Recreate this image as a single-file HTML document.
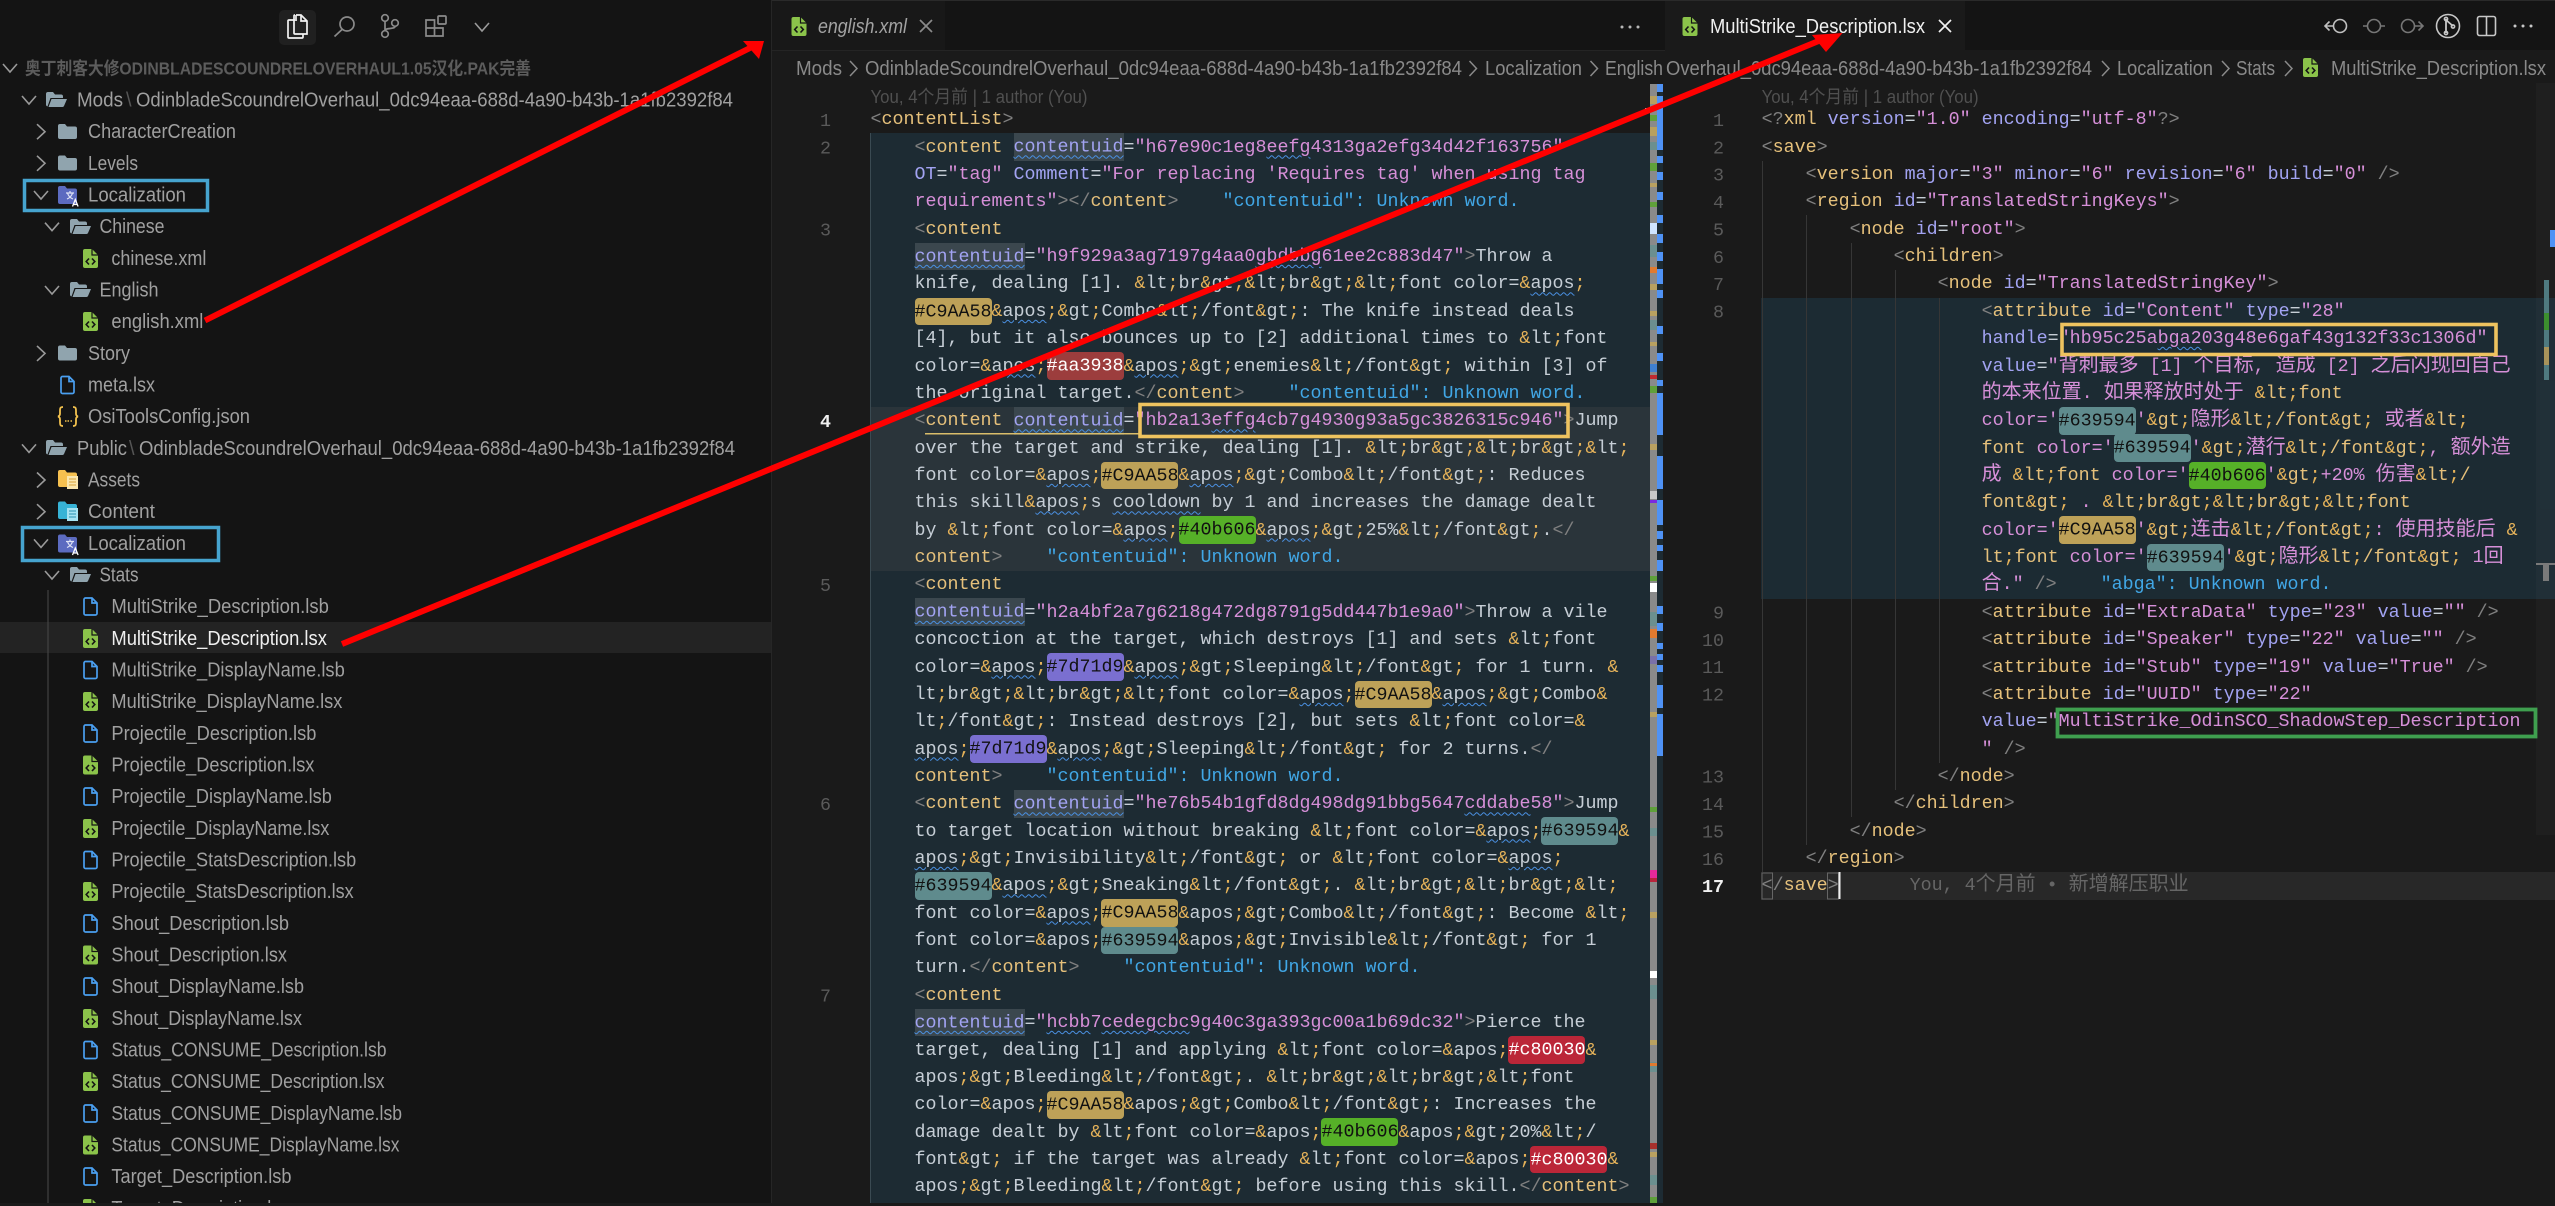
<!DOCTYPE html>
<html lang="en"><head><meta charset="utf-8"><title>VS Code</title>
<style>
html,body{margin:0;padding:0;width:2555px;height:1203px;overflow:hidden;background:#1a1a1a}
.r{position:absolute}
pre{position:absolute;margin:0;top:106.32px;font:18.33px/27.36px "Liberation Mono","Noto Sans CJK SC",monospace;color:#c6ced6;white-space:pre;overflow:hidden;height:1100px}
b{font-weight:normal;color:#808080}
i{font-style:normal;color:#e5c07b}
u{text-decoration:none;color:#a2a3f2}
s{text-decoration:none;color:#d68fd8}
em{font-style:normal;color:#e6b35a}
cite{font-style:normal;color:#41a7e6}
mark{background:#3b474e;color:#a2a3f2;padding:3.3px 0}
var{font-style:normal;text-decoration:underline wavy #4a90e2 1px;text-underline-offset:3px}
kbd{font:inherit;padding:3.3px 0;border-radius:4px;color:#111}
.cy{background:#bda158}.cr{background:#9c3d3d;color:#fff}.cg{background:#56b028}.cp{background:#7a6fd0}.ct{background:#5f8b8d}.cc{background:#bb2638;color:#fff}
small{font:20px/0 "Noto Sans CJK SC",sans-serif}
svg{position:absolute;left:0;top:0}
</style></head><body>
<div class="r" style="left:0;top:0;width:771px;height:1203px;background:#141414"></div>
<div class="r" style="left:0;top:622px;width:771px;height:31px;background:#232323"></div>
<div class="r" style="left:771px;top:0;width:1784px;height:50px;background:#141414"></div>
<div class="r" style="left:772px;top:0;width:173px;height:50px;background:#181818"></div>
<div class="r" style="left:1665px;top:0;width:300px;height:51px;background:#1a1a1a"></div>
<div class="r" style="left:771px;top:0;width:1784px;height:1px;background:#2a2a2a"></div>
<div class="r" style="left:771px;top:50px;width:894px;height:1px;background:#242424"></div>
<div class="r" style="left:771px;top:0;width:1px;height:1203px;background:#262626"></div>
<div class="r" style="left:870px;top:133px;width:780px;height:1070px;background:#1d2b33"></div>
<div class="r" style="left:870px;top:407px;width:780px;height:164px;background:#2a343a"></div>
<div class="r" style="left:870px;top:133px;width:1px;height:1070px;background:#3a4a52"></div>
<div class="r" style="left:1657px;top:84px;width:6px;height:1119px;background:#1d2b33"></div>
<div class="r" style="left:1761px;top:298px;width:794px;height:301px;background:#1c2b33"></div>
<div class="r" style="left:1761px;top:872px;width:794px;height:28px;background:#282828"></div>
<div class="r" style="left:1761.5px;top:161px;width:1px;height:711px;background:#363636"></div>
<div class="r" style="left:1806px;top:215px;width:1px;height:630px;background:#363636"></div>
<div class="r" style="left:1851px;top:243px;width:1px;height:574px;background:#363636"></div>
<div class="r" style="left:1895px;top:270px;width:1px;height:520px;background:#363636"></div>
<div class="r" style="left:1939px;top:298px;width:1px;height:465px;background:#363636"></div>
<div class="r" style="left:2536px;top:83px;width:19px;height:752px;background:rgba(255,255,255,.025)"></div>

<pre style="left:870.5px;width:782px"><b>&lt;</b><i>contentList</i><b>&gt;</b>
    <b>&lt;</b><i>content</i> <mark><var>contentuid</var></mark>=<s>"h67e90c1eg8<var>eefg</var>4313ga2efg34d42f163756"</s>
    <u>OT</u>=<s>"tag"</s> <u>Comment</u>=<s>"For replacing 'Requires tag' when using tag</s>
    <s>requirements"</s><b>&gt;&lt;/</b><i>content</i><b>&gt;</b>    <cite>"contentuid": Unknown word.</cite>
    <b>&lt;</b><i>content</i>
    <mark><var>contentuid</var></mark>=<s>"h9f929a3ag7197g4aa0<var>gbdbbg</var>61ee2c883d47"</s><b>&gt;</b>Throw a
    knife, dealing [1]. <em>&amp;</em>lt<em>;</em>br<em>&amp;</em>gt<em>;</em><em>&amp;</em>lt<em>;</em>br<em>&amp;</em>gt<em>;</em><em>&amp;</em>lt<em>;</em>font color=<em>&amp;</em><var>apos</var><em>;</em>
    <kbd class="cy">#C9AA58</kbd><em>&amp;</em><var>apos</var><em>;</em><em>&amp;</em>gt<em>;</em>Combo<em>&amp;</em>lt<em>;</em>/font<em>&amp;</em>gt<em>;</em>: The knife instead deals
    [4], but it also bounces up to [2] additional times to <em>&amp;</em>lt<em>;</em>font
    color=<em>&amp;</em><var>apos</var><em>;</em><kbd class="cr">#aa3938</kbd><em>&amp;</em><var>apos</var><em>;</em><em>&amp;</em>gt<em>;</em>enemies<em>&amp;</em>lt<em>;</em>/font<em>&amp;</em>gt<em>;</em> within [3] of
    the original target.<b>&lt;/</b><i>content</i><b>&gt;</b>    <cite>"contentuid": Unknown word.</cite>
    <b>&lt;</b><i>content</i> <mark><var>contentuid</var></mark>=<s>"hb2a13<var>effg</var>4cb7g4930g93a5gc3826315c946"</s><b>&gt;</b>Jump
    over the target and strike, dealing [1]. <em>&amp;</em>lt<em>;</em>br<em>&amp;</em>gt<em>;</em><em>&amp;</em>lt<em>;</em>br<em>&amp;</em>gt<em>;</em><em>&amp;</em>lt<em>;</em>
    font color=<em>&amp;</em><var>apos</var><em>;</em><kbd class="cy">#C9AA58</kbd><em>&amp;</em><var>apos</var><em>;</em><em>&amp;</em>gt<em>;</em>Combo<em>&amp;</em>lt<em>;</em>/font<em>&amp;</em>gt<em>;</em>: Reduces
    this skill<em>&amp;</em><var>apos</var><em>;</em>s <var>cooldown</var> by 1 and increases the damage dealt
    by <em>&amp;</em>lt<em>;</em>font color=<em>&amp;</em><var>apos</var><em>;</em><kbd class="cg">#40b606</kbd><em>&amp;</em><var>apos</var><em>;</em><em>&amp;</em>gt<em>;</em>25%<em>&amp;</em>lt<em>;</em>/font<em>&amp;</em>gt<em>;</em>.<b>&lt;/</b>
    <i>content</i><b>&gt;</b>    <cite>"contentuid": Unknown word.</cite>
    <b>&lt;</b><i>content</i>
    <mark><var>contentuid</var></mark>=<s>"h2a4bf2a7g6218g472dg8791g5dd447b1e9a0"</s><b>&gt;</b>Throw a vile
    concoction at the target, which destroys [1] and sets <em>&amp;</em>lt<em>;</em>font
    color=<em>&amp;</em><var>apos</var><em>;</em><kbd class="cp">#7d71d9</kbd><em>&amp;</em><var>apos</var><em>;</em><em>&amp;</em>gt<em>;</em>Sleeping<em>&amp;</em>lt<em>;</em>/font<em>&amp;</em>gt<em>;</em> for 1 turn. <em>&amp;</em>
    lt<em>;</em>br<em>&amp;</em>gt<em>;</em><em>&amp;</em>lt<em>;</em>br<em>&amp;</em>gt<em>;</em><em>&amp;</em>lt<em>;</em>font color=<em>&amp;</em><var>apos</var><em>;</em><kbd class="cy">#C9AA58</kbd><em>&amp;</em><var>apos</var><em>;</em><em>&amp;</em>gt<em>;</em>Combo<em>&amp;</em>
    lt<em>;</em>/font<em>&amp;</em>gt<em>;</em>: Instead destroys [2], but sets <em>&amp;</em>lt<em>;</em>font color=<em>&amp;</em>
    <var>apos</var><em>;</em><kbd class="cp">#7d71d9</kbd><em>&amp;</em><var>apos</var><em>;</em><em>&amp;</em>gt<em>;</em>Sleeping<em>&amp;</em>lt<em>;</em>/font<em>&amp;</em>gt<em>;</em> for 2 turns.<b>&lt;/</b>
    <i>content</i><b>&gt;</b>    <cite>"contentuid": Unknown word.</cite>
    <b>&lt;</b><i>content</i> <mark><var>contentuid</var></mark>=<s>"he76b54b1gfd8dg498dg91bbg5647<var>cddabe</var>58"</s><b>&gt;</b>Jump
    to target location without breaking <em>&amp;</em>lt<em>;</em>font color=<em>&amp;</em><var>apos</var><em>;</em><kbd class="ct">#639594</kbd><em>&amp;</em>
    <var>apos</var><em>;</em><em>&amp;</em>gt<em>;</em>Invisibility<em>&amp;</em>lt<em>;</em>/font<em>&amp;</em>gt<em>;</em> or <em>&amp;</em>lt<em>;</em>font color=<em>&amp;</em><var>apos</var><em>;</em>
    <kbd class="ct">#639594</kbd><em>&amp;</em><var>apos</var><em>;</em><em>&amp;</em>gt<em>;</em>Sneaking<em>&amp;</em>lt<em>;</em>/font<em>&amp;</em>gt<em>;</em>. <em>&amp;</em>lt<em>;</em>br<em>&amp;</em>gt<em>;</em><em>&amp;</em>lt<em>;</em>br<em>&amp;</em>gt<em>;</em><em>&amp;</em>lt<em>;</em>
    font color=<em>&amp;</em><var>apos</var><em>;</em><kbd class="cy">#C9AA58</kbd><em>&amp;</em>apos<em>;</em><em>&amp;</em>gt<em>;</em>Combo<em>&amp;</em>lt<em>;</em>/font<em>&amp;</em>gt<em>;</em>: Become <em>&amp;</em>lt<em>;</em>
    font color=<em>&amp;</em>apos<em>;</em><kbd class="ct">#639594</kbd><em>&amp;</em>apos<em>;</em><em>&amp;</em>gt<em>;</em>Invisible<em>&amp;</em>lt<em>;</em>/font<em>&amp;</em>gt<em>;</em> for 1
    turn.<b>&lt;/</b><i>content</i><b>&gt;</b>    <cite>"contentuid": Unknown word.</cite>
    <b>&lt;</b><i>content</i>
    <mark><var>contentuid</var></mark>=<s>"<var>hcbb</var>7<var>cedegcbc</var>9g40c3ga393gc00a1b69dc32"</s><b>&gt;</b>Pierce the
    target, dealing [1] and applying <em>&amp;</em>lt<em>;</em>font color=<em>&amp;</em>apos<em>;</em><kbd class="cc">#c80030</kbd><em>&amp;</em>
    apos<em>;</em><em>&amp;</em>gt<em>;</em>Bleeding<em>&amp;</em>lt<em>;</em>/font<em>&amp;</em>gt<em>;</em>. <em>&amp;</em>lt<em>;</em>br<em>&amp;</em>gt<em>;</em><em>&amp;</em>lt<em>;</em>br<em>&amp;</em>gt<em>;</em><em>&amp;</em>lt<em>;</em>font
    color=<em>&amp;</em>apos<em>;</em><kbd class="cy">#C9AA58</kbd><em>&amp;</em>apos<em>;</em><em>&amp;</em>gt<em>;</em>Combo<em>&amp;</em>lt<em>;</em>/font<em>&amp;</em>gt<em>;</em>: Increases the
    damage dealt by <em>&amp;</em>lt<em>;</em>font color=<em>&amp;</em>apos<em>;</em><kbd class="cg">#40b606</kbd><em>&amp;</em>apos<em>;</em><em>&amp;</em>gt<em>;</em>20%<em>&amp;</em>lt<em>;</em>/
    font<em>&amp;</em>gt<em>;</em> if the target was already <em>&amp;</em>lt<em>;</em>font color=<em>&amp;</em>apos<em>;</em><kbd class="cc">#c80030</kbd><em>&amp;</em>
    apos<em>;</em><em>&amp;</em>gt<em>;</em>Bleeding<em>&amp;</em>lt<em>;</em>/font<em>&amp;</em>gt<em>;</em> before using this skill.<b>&lt;/</b><i>content</i><b>&gt;</b></pre>

<pre style="left:1761.6px;width:775px"><b>&lt;?</b><i>xml</i> <u>version</u>=<s>"1.0"</s> <u>encoding</u>=<s>"utf-8"</s><b>?&gt;</b>
<b>&lt;</b><i>save</i><b>&gt;</b>
    <b>&lt;</b><i>version</i> <u>major</u>=<s>"3"</s> <u>minor</u>=<s>"6"</s> <u>revision</u>=<s>"6"</s> <u>build</u>=<s>"0"</s> <b>/&gt;</b>
    <b>&lt;</b><i>region</i> <u>id</u>=<s>"TranslatedStringKeys"</s><b>&gt;</b>
        <b>&lt;</b><i>node</i> <u>id</u>=<s>"root"</s><b>&gt;</b>
            <b>&lt;</b><i>children</i><b>&gt;</b>
                <b>&lt;</b><i>node</i> <u>id</u>=<s>"TranslatedStringKey"</s><b>&gt;</b>
                    <b>&lt;</b><i>attribute</i> <u>id</u>=<s>"Content"</s> <u>type</u>=<s>"28"</s>
                    <u>handle</u>=<s>"hb95c25a<var>bga2</var>03g48e6gaf43g132f33c1306d"</s>
                    <u>value</u>=<s>"<small>背刺最多</small> [1] <small>个目标</small>, <small>造成</small> [2] <small>之后闪现回自己</small></s>
                    <s><small>的本来位置</small>. <small>如果释放时处于</small> </s><em>&amp;</em><i>lt</i><em>;</em><i>font</i>
                    <s>color='</s><kbd class="ct">#639594</kbd><s>'</s><em>&amp;</em><i>gt</i><em>;</em><s><small>隐形</small></s><em>&amp;</em><i>lt</i><em>;</em><i>/font</i><em>&amp;</em><i>gt</i><em>;</em> <s><small>或者</small></s><em>&amp;</em><i>lt</i><em>;</em>
                    <i>font</i> <s>color='</s><kbd class="ct">#639594</kbd><s>'</s><em>&amp;</em><i>gt</i><em>;</em><s><small>潜行</small></s><em>&amp;</em><i>lt</i><em>;</em><i>/font</i><em>&amp;</em><i>gt</i><em>;</em><s>, <small>额外造</small></s>
                    <s><small>成</small> </s><em>&amp;</em><i>lt</i><em>;</em><i>font</i> <s>color='</s><kbd class="cg">#40b606</kbd><s>'</s><em>&amp;</em><i>gt</i><em>;</em><s>+20% <small>伤害</small></s><em>&amp;</em><i>lt</i><em>;</em><i>/</i>
                    <i>font</i><em>&amp;</em><i>gt</i><em>;</em> <s>.</s> <em>&amp;</em><i>lt</i><em>;</em><i>br</i><em>&amp;</em><i>gt</i><em>;</em><em>&amp;</em><i>lt</i><em>;</em><i>br</i><em>&amp;</em><i>gt</i><em>;</em><em>&amp;</em><i>lt</i><em>;</em><i>font</i>
                    <s>color='</s><kbd class="cy">#C9AA58</kbd><s>'</s><em>&amp;</em><i>gt</i><em>;</em><s><small>连击</small></s><em>&amp;</em><i>lt</i><em>;</em><i>/font</i><em>&amp;</em><i>gt</i><em>;</em><s>: <small>使用技能后</small> </s><em>&amp;</em>
                    <i>lt</i><em>;</em><i>font</i> <s>color='</s><kbd class="ct">#639594</kbd><s>'</s><em>&amp;</em><i>gt</i><em>;</em><s><small>隐形</small></s><em>&amp;</em><i>lt</i><em>;</em><i>/font</i><em>&amp;</em><i>gt</i><em>;</em> <s>1<small>回</small></s>
                    <s><small>合</small>."</s> <b>/&gt;</b>    <cite>"abga": Unknown word.</cite>
                    <b>&lt;</b><i>attribute</i> <u>id</u>=<s>"ExtraData"</s> <u>type</u>=<s>"23"</s> <u>value</u>=<s>""</s> <b>/&gt;</b>
                    <b>&lt;</b><i>attribute</i> <u>id</u>=<s>"Speaker"</s> <u>type</u>=<s>"22"</s> <u>value</u>=<s>""</s> <b>/&gt;</b>
                    <b>&lt;</b><i>attribute</i> <u>id</u>=<s>"Stub"</s> <u>type</u>=<s>"19"</s> <u>value</u>=<s>"True"</s> <b>/&gt;</b>
                    <b>&lt;</b><i>attribute</i> <u>id</u>=<s>"UUID"</s> <u>type</u>=<s>"22"</s>
                    <u>value</u>=<s>"MultiStrike_OdinSCO_ShadowStep_Description</s>
                    <s>"</s> <b>/&gt;</b>
                <b>&lt;/</b><i>node</i><b>&gt;</b>
            <b>&lt;/</b><i>children</i><b>&gt;</b>
        <b>&lt;/</b><i>node</i><b>&gt;</b>
    <b>&lt;/</b><i>region</i><b>&gt;</b>
<b>&lt;/</b><i>save</i><b>&gt;</b><span style="margin-left:71px;color:#666">You, 4<small>个月前</small> • <small>新增解压职业</small></span></pre>

<svg width="2555" height="1203" viewBox="0 0 2555 1203" xmlns="http://www.w3.org/2000/svg">
<defs>
<symbol id="xm" viewBox="0 0 15 19" width="15" height="19" overflow="visible"><path d="M0 2a2 2 0 0 1 2-2h7l6 6v11a2 2 0 0 1-2 2H2a2 2 0 0 1-2-2z" fill="#8bc34a"/><path d="M9 0v6h6" fill="none" stroke="#141414" stroke-width="1.2"/><path d="M6 9.5L3.2 12.5L6 15.5M9 9.5L11.8 12.5L9 15.5" fill="none" stroke="#141414" stroke-width="1.6"/></symbol>
<symbol id="bl" viewBox="0 0 15 19" width="15" height="19" overflow="visible"><path d="M1 2.5a1.5 1.5 0 0 1 1.5-1.5H9l5 5v10.5a1.5 1.5 0 0 1-1.5 1.5h-10A1.5 1.5 0 0 1 1 16.5zM9 1v5h5" fill="none" stroke="#4a9ff0" stroke-width="1.7"/></symbol>
<symbol id="fc" viewBox="0 0 19 15" width="19" height="15" overflow="visible"><path d="M0 2a2 2 0 0 1 2-2h5l2 2.5h8a2 2 0 0 1 2 2V13a2 2 0 0 1-2 2H2a2 2 0 0 1-2-2z" fill="#90a4ae"/></symbol>
<symbol id="fo" viewBox="0 0 21 15" width="21" height="15" overflow="visible"><path d="M0 2a2 2 0 0 1 2-2h5l2 2.5h6a2 2 0 0 1 2 2V6H4.5L1.5 14.5A2 2 0 0 1 0 13z" fill="#90a4ae"/><path d="M5.5 7H21l-3 7a1.6 1.6 0 0 1-1.5 1H2.5z" fill="#90a4ae"/></symbol>
<symbol id="fl" viewBox="0 0 21 22" width="21" height="22" overflow="visible"><path d="M0 2a2 2 0 0 1 2-2h5l2 2.5h8a2 2 0 0 1 2 2V16a2 2 0 0 1-2 2H2a2 2 0 0 1-2-2z" fill="#5c6bc0"/><path d="M8 7h8M12 5v2M9.5 7c.8 3 3 5 5.5 6M14.5 7c-.8 3-3 5-5.5 6" fill="none" stroke="#dfe3f5" stroke-width="1.2"/><path d="M14.5 20.5l2.8-7 2.8 7M15.5 18.5h3.6" fill="none" stroke="#fff" stroke-width="1.3"/></symbol>
<path id="cd" d="M-7-4L0 4L7-4" fill="none" stroke="#9a9a9a" stroke-width="1.6"/>
<path id="cr" d="M-4-7.5L4 0L-4 7.5" fill="none" stroke="#9a9a9a" stroke-width="1.6"/>
</defs>

<!-- activity icons -->
<rect x="279" y="10" width="37" height="35" rx="5" fill="#202020"/>
<path d="M296 15h5l6 6v13h-4M296 15v6M301 15v6h6M295 20h-6a1 1 0 0 0-1 1v16a1 1 0 0 0 1 1h13a1 1 0 0 0 1-1v-3h-8a1 1 0 0 1-1-1V16a1 1 0 0 1 1-1" fill="none" stroke="#f2f2f2" stroke-width="1.7"/>
<circle cx="347" cy="24" r="7" fill="none" stroke="#8a8a8a" stroke-width="1.7"/><path d="M342 29.5L334.5 36.5" stroke="#8a8a8a" stroke-width="1.7"/>
<circle cx="385" cy="18" r="3.3" fill="none" stroke="#8a8a8a" stroke-width="1.7"/><circle cx="385" cy="34" r="3.3" fill="none" stroke="#8a8a8a" stroke-width="1.7"/><circle cx="395" cy="23" r="3.3" fill="none" stroke="#8a8a8a" stroke-width="1.7"/><path d="M385 21.5v9M395 26.5c0 3-10 1-10 4" fill="none" stroke="#8a8a8a" stroke-width="1.7"/>
<path d="M426 20h8.5v16H426zM426 28h17v8h-8.5M434.5 28v-8" fill="none" stroke="#8a8a8a" stroke-width="1.7"/><rect x="438" y="16" width="8" height="8" rx="1" fill="none" stroke="#8a8a8a" stroke-width="1.7"/>
<use href="#cd" x="482" y="27"/>

<!-- sidebar -->
<line x1="48" y1="590" x2="48" y2="1203" stroke="#4a4a4a" stroke-width="1"/>
<g font-family="'Liberation Sans','Noto Sans CJK SC',sans-serif" font-size="20" fill="#a0a0a0">
<text x="25" y="74.5" font-size="17.5" font-weight="bold" fill="#5c5c5c" textLength="506" lengthAdjust="spacingAndGlyphs">奥丁刺客大修ODINBLADESCOUNDRELOVERHAUL1.05汉化.PAK完善</text>
<text x="77" y="106.5" textLength="46" lengthAdjust="spacingAndGlyphs">Mods</text><text x="126" y="106.5" fill="#555">\</text><text x="136" y="106.5" textLength="597" lengthAdjust="spacingAndGlyphs">OdinbladeScoundrelOverhaul_0dc94eaa-688d-4a90-b43b-1a1fb2392f84</text>
<text x="88" y="138.2" textLength="148" lengthAdjust="spacingAndGlyphs">CharacterCreation</text>
<text x="88" y="169.8" textLength="50" lengthAdjust="spacingAndGlyphs">Levels</text>
<text x="88" y="201.5" textLength="98" lengthAdjust="spacingAndGlyphs">Localization</text>
<text x="99.5" y="233.2" textLength="65" lengthAdjust="spacingAndGlyphs">Chinese</text>
<text x="111.4" y="264.9" textLength="95" lengthAdjust="spacingAndGlyphs">chinese.xml</text>
<text x="99.5" y="296.5" textLength="59" lengthAdjust="spacingAndGlyphs">English</text>
<text x="111.4" y="328.2" textLength="92" lengthAdjust="spacingAndGlyphs">english.xml</text>
<text x="88" y="359.9" textLength="42" lengthAdjust="spacingAndGlyphs">Story</text>
<text x="88" y="391.5" textLength="67" lengthAdjust="spacingAndGlyphs">meta.lsx</text>
<text x="88" y="423.2" textLength="162" lengthAdjust="spacingAndGlyphs">OsiToolsConfig.json</text>
<text x="77" y="454.9" textLength="50" lengthAdjust="spacingAndGlyphs">Public</text><text x="129" y="454.9" fill="#555">\</text><text x="139" y="454.9" textLength="596" lengthAdjust="spacingAndGlyphs">OdinbladeScoundrelOverhaul_0dc94eaa-688d-4a90-b43b-1a1fb2392f84</text>
<text x="88" y="486.5" textLength="52" lengthAdjust="spacingAndGlyphs">Assets</text>
<text x="88" y="518.2" textLength="67" lengthAdjust="spacingAndGlyphs">Content</text>
<text x="88" y="549.9" textLength="98" lengthAdjust="spacingAndGlyphs">Localization</text>
<text x="99.5" y="581.5" textLength="39" lengthAdjust="spacingAndGlyphs">Stats</text>
<text x="111.4" y="613.2" textLength="217.5" lengthAdjust="spacingAndGlyphs">MultiStrike_Description.lsb</text>
<text x="111.4" y="644.9" textLength="215.5" lengthAdjust="spacingAndGlyphs" fill="#efefef">MultiStrike_Description.lsx</text>
<text x="111.4" y="676.5" textLength="233.4" lengthAdjust="spacingAndGlyphs">MultiStrike_DisplayName.lsb</text>
<text x="111.4" y="708.2" textLength="231" lengthAdjust="spacingAndGlyphs">MultiStrike_DisplayName.lsx</text>
<text x="111.4" y="739.9" textLength="205" lengthAdjust="spacingAndGlyphs">Projectile_Description.lsb</text>
<text x="111.4" y="771.5" textLength="203" lengthAdjust="spacingAndGlyphs">Projectile_Description.lsx</text>
<text x="111.4" y="803.2" textLength="220.4" lengthAdjust="spacingAndGlyphs">Projectile_DisplayName.lsb</text>
<text x="111.4" y="834.9" textLength="218" lengthAdjust="spacingAndGlyphs">Projectile_DisplayName.lsx</text>
<text x="111.4" y="866.5" textLength="244.8" lengthAdjust="spacingAndGlyphs">Projectile_StatsDescription.lsb</text>
<text x="111.4" y="898.2" textLength="242.3" lengthAdjust="spacingAndGlyphs">Projectile_StatsDescription.lsx</text>
<text x="111.4" y="929.9" textLength="177.6" lengthAdjust="spacingAndGlyphs">Shout_Description.lsb</text>
<text x="111.4" y="961.5" textLength="175.6" lengthAdjust="spacingAndGlyphs">Shout_Description.lsx</text>
<text x="111.4" y="993.2" textLength="192.6" lengthAdjust="spacingAndGlyphs">Shout_DisplayName.lsb</text>
<text x="111.4" y="1024.9" textLength="190.6" lengthAdjust="spacingAndGlyphs">Shout_DisplayName.lsx</text>
<text x="111.4" y="1056.5" textLength="275.2" lengthAdjust="spacingAndGlyphs">Status_CONSUME_Description.lsb</text>
<text x="111.4" y="1088.2" textLength="273.2" lengthAdjust="spacingAndGlyphs">Status_CONSUME_Description.lsx</text>
<text x="111.4" y="1119.9" textLength="290.6" lengthAdjust="spacingAndGlyphs">Status_CONSUME_DisplayName.lsb</text>
<text x="111.4" y="1151.5" textLength="288.1" lengthAdjust="spacingAndGlyphs">Status_CONSUME_DisplayName.lsx</text>
<text x="111.4" y="1183.2" textLength="180.1" lengthAdjust="spacingAndGlyphs">Target_Description.lsb</text>
<text x="111.4" y="1214.9" textLength="178" lengthAdjust="spacingAndGlyphs">Target_Description.lsx</text>
</g>
<use href="#cd" x="10" y="68"/><use href="#cd" x="29" y="100"/><use href="#cd" x="29" y="448.4"/>
<use href="#cr" x="41" y="131.7"/><use href="#cr" x="41" y="163.3"/><use href="#cd" x="41" y="195"/><use href="#cd" x="52" y="226.7"/><use href="#cd" x="52" y="290"/><use href="#cr" x="41" y="353.4"/>
<use href="#cr" x="41" y="480"/><use href="#cr" x="41" y="511.7"/><use href="#cd" x="41" y="543.4"/><use href="#cd" x="52" y="575"/>
<use href="#fo" x="46" y="92"/><use href="#fo" x="46" y="440"/>
<use href="#fc" x="58" y="124"/><use href="#fc" x="58" y="155.5"/><use href="#fc" x="58" y="345.5"/>
<use href="#fl" x="58" y="186"/><use href="#fl" x="58" y="534.5"/>
<use href="#fo" x="70" y="219"/><use href="#fo" x="70" y="282"/><use href="#fo" x="70" y="567"/>
<use href="#xm" x="83" y="249"/><use href="#xm" x="83" y="312"/>
<use href="#bl" x="60" y="375.5"/>
<g fill="none" stroke="#f2c14e" stroke-width="1.8"><path d="M63 407c-3 0-3 1.500-3 4v3c0 2-2 2.500-2 2.500s2 .5 2 2.500v3c0 2.500 0 4 3 4M73 407c3 0 3 1.500 3 4v3c0 2 2 2.500 2 2.500s-2 .5-2 2.500v3c0 2.500 0 4-3 4"/></g><path d="M65 421h1.500M67.500 421H69M70.500 421H72" stroke="#f2c14e" stroke-width="1.500"/>
<g><path d="M58 472a2 2 0 0 1 2-2h5l2 2.500h8a2 2 0 0 1 2 2V485a2 2 0 0 1-2 2H60a2 2 0 0 1-2-2z" fill="#f6c04f"/><path d="M67 476h11v13H67z" fill="#fbe7ae"/><path d="M69 479h7M69 482h7M69 485h7" stroke="#d9a33a" stroke-width="1"/></g>
<g><path d="M58 503.500a2 2 0 0 1 2-2h5l2 2.500h8a2 2 0 0 1 2 2V517a2 2 0 0 1-2 2H60a2 2 0 0 1-2-2z" fill="#37b3d6"/><path d="M67 508h11v13H67z" fill="#a6e3f2"/><path d="M69 511h7M69 514h7M69 517h7" stroke="#2a90b0" stroke-width="1"/></g>
<use href="#bl" x="83" y="597"/><use href="#xm" x="83" y="629"/><use href="#bl" x="83" y="660.500"/><use href="#xm" x="83" y="692"/><use href="#bl" x="83" y="724"/><use href="#xm" x="83" y="755.500"/><use href="#bl" x="83" y="787"/><use href="#xm" x="83" y="819"/><use href="#bl" x="83" y="850.500"/><use href="#xm" x="83" y="882"/><use href="#bl" x="83" y="914"/><use href="#xm" x="83" y="945.500"/><use href="#bl" x="83" y="977"/><use href="#xm" x="83" y="1009"/><use href="#bl" x="83" y="1040.500"/><use href="#xm" x="83" y="1072"/><use href="#bl" x="83" y="1104"/><use href="#xm" x="83" y="1135.500"/><use href="#bl" x="83" y="1167"/><use href="#xm" x="83" y="1199"/>

<!-- tabs -->
<use href="#xm" x="791" y="17" width="16" height="19"/>
<use href="#xm" x="1682" y="17" width="16" height="19"/>
<g font-family="'Liberation Sans','Noto Sans CJK SC',sans-serif" font-size="20">
<text x="818" y="33" font-style="italic" fill="#a2a2a2" textLength="89" lengthAdjust="spacingAndGlyphs">english.xml</text>
<text x="1710" y="33" fill="#f0f0f0" textLength="215" lengthAdjust="spacingAndGlyphs">MultiStrike_Description.lsx</text>
<g fill="#8a8a8a">
<text x="796" y="75" textLength="46" lengthAdjust="spacingAndGlyphs">Mods</text>
<text x="865" y="75" textLength="597" lengthAdjust="spacingAndGlyphs">OdinbladeScoundrelOverhaul_0dc94eaa-688d-4a90-b43b-1a1fb2392f84</text>
<text x="1485" y="75" textLength="97" lengthAdjust="spacingAndGlyphs">Localization</text>
<text x="1605" y="75" textLength="58" lengthAdjust="spacingAndGlyphs">English</text>
<text x="1666" y="75" textLength="426" lengthAdjust="spacingAndGlyphs">Overhaul_0dc94eaa-688d-4a90-b43b-1a1fb2392f84</text>
<text x="2117" y="75" textLength="96" lengthAdjust="spacingAndGlyphs">Localization</text>
<text x="2236" y="75" textLength="39" lengthAdjust="spacingAndGlyphs">Stats</text>
<text x="2331" y="75" textLength="215" lengthAdjust="spacingAndGlyphs">MultiStrike_Description.lsx</text>
</g>
<g fill="#505050" font-size="18">
<text x="870.500" y="103" textLength="217" lengthAdjust="spacingAndGlyphs">You, 4个月前 | 1 author (You)</text>
<text x="1761.600" y="103" textLength="217" lengthAdjust="spacingAndGlyphs">You, 4个月前 | 1 author (You)</text>
</g>
</g>
<path d="M920 20l12 12M932 20l-12 12" stroke="#8a8a8a" stroke-width="1.700"/>
<path d="M1939 20l12 12M1951 20l-12 12" stroke="#f0f0f0" stroke-width="1.700"/>
<g fill="#b8b8b8"><circle cx="1622" cy="27" r="1.500"/><circle cx="1630" cy="27" r="1.500"/><circle cx="1638" cy="27" r="1.500"/></g>
<g fill="none" stroke="#8a8a8a" stroke-width="1.500"><path d="M850 61l7 7.500-7 7.500M1469.500 61l7 7.500-7 7.500M1590.500 61l7 7.500-7 7.500M2102 61l7 7.500-7 7.500M2222 61l7 7.500-7 7.500M2285 61l7 7.500-7 7.500"/></g>
<use href="#xm" x="2303" y="58"/>
<!-- right toolbar -->
<g fill="none" stroke-width="1.600">
<g stroke="#c0c0c0"><circle cx="2340" cy="26" r="6.500"/><path d="M2333.500 26h-8M2329.500 21.500l-4.500 4.500 4.500 4.500"/></g>
<g stroke="#777"><circle cx="2374" cy="26" r="6.500"/><path d="M2367.500 26h-4.500M2380.500 26h4.500"/></g>
<g stroke="#777"><circle cx="2408" cy="26" r="6.500"/><path d="M2414.500 26h8M2418.500 21.500l4.500 4.500-4.500 4.500"/></g>
<g stroke="#c8c8c8"><circle cx="2448" cy="26" r="11.500"/><path d="M2446 19v14M2446 20l7 6" stroke-width="1.800"/><circle cx="2446" cy="33" r="1.600"/><circle cx="2446" cy="19" r="1.600"/><circle cx="2453" cy="26.500" r="1.600"/></g>
<g stroke="#c8c8c8"><rect x="2477.500" y="16.500" width="18" height="19" rx="2"/><path d="M2486.500 16.500v19"/></g>
</g>
<g fill="#c8c8c8"><circle cx="2515" cy="26" r="1.500"/><circle cx="2523" cy="26" r="1.500"/><circle cx="2531" cy="26" r="1.500"/></g>

<!-- line numbers -->
<g font-family="'Liberation Mono',monospace" font-size="18.330" fill="#5a5a5a" text-anchor="end">
<text x="831" y="126">1</text><text x="831" y="153.400">2</text><text x="831" y="235.400">3</text><text x="831" y="427" fill="#f0f0f0" font-weight="bold">4</text><text x="831" y="591">5</text><text x="831" y="810">6</text><text x="831" y="1001.500">7</text>
<text x="1724" y="126">1</text><text x="1724" y="153.400">2</text><text x="1724" y="180.700">3</text><text x="1724" y="208">4</text><text x="1724" y="235.400">5</text><text x="1724" y="262.800">6</text><text x="1724" y="290.200">7</text><text x="1724" y="317.500">8</text><text x="1724" y="618.500">9</text><text x="1724" y="645.900">10</text><text x="1724" y="673.200">11</text><text x="1724" y="700.600">12</text><text x="1724" y="782.700">13</text><text x="1724" y="810">14</text><text x="1724" y="837.400">15</text><text x="1724" y="864.800">16</text><text x="1724" y="892.100" fill="#f0f0f0" font-weight="bold">17</text>
</g>

<!-- bracket match + cursor -->
<rect x="1762" y="873" width="10.500" height="26" fill="none" stroke="#666"/><rect x="1827.500" y="873" width="11" height="26" fill="none" stroke="#666"/>
<rect x="1838.500" y="872" width="2" height="27" fill="#f0f0f0"/>
<rect x="925" y="433" width="214" height="1.500" fill="#d9bd6a"/>

<!-- overview ruler left -->
<rect x="1650" y="84" width="7" height="1119" fill="#8a8a8a"/>
<g fill="#b8a060"><rect x="1650" y="96" width="7" height="8"/><rect x="1650" y="127" width="7" height="9"/><rect x="1650" y="183" width="7" height="4"/><rect x="1650" y="284" width="7" height="6"/><rect x="1650" y="311" width="7" height="5"/><rect x="1650" y="342" width="7" height="4"/><rect x="1650" y="444" width="7" height="6"/><rect x="1650" y="712" width="7" height="5"/><rect x="1650" y="912" width="7" height="6"/><rect x="1650" y="1040" width="7" height="5"/><rect x="1650" y="1152" width="7" height="5"/></g>
<g fill="#5fa03a"><rect x="1650" y="115" width="7" height="6"/><rect x="1650" y="163" width="7" height="8"/><rect x="1650" y="202" width="7" height="5"/><rect x="1650" y="386" width="7" height="7"/><rect x="1650" y="576" width="7" height="5"/><rect x="1650" y="807" width="7" height="5"/><rect x="1650" y="1197" width="7" height="6"/></g>
<g fill="#6b8f8f"><rect x="1650" y="142" width="7" height="8"/><rect x="1650" y="245" width="7" height="12"/><rect x="1650" y="320" width="7" height="10"/><rect x="1650" y="612" width="7" height="14"/><rect x="1650" y="828" width="7" height="8"/><rect x="1650" y="985" width="7" height="14"/><rect x="1650" y="1062" width="7" height="10"/><rect x="1650" y="1175" width="7" height="10"/></g>
<rect x="1650" y="223" width="7" height="11" fill="#cfe4ff"/><rect x="1650" y="267" width="7" height="6" fill="#e07a30"/><rect x="1650" y="364" width="7" height="8" fill="#3f7fd0"/><rect x="1650" y="375" width="7" height="4" fill="#c02a30"/><rect x="1650" y="491" width="7" height="8" fill="#c8c8c8"/><rect x="1650" y="500" width="7" height="3" fill="#7a28e0"/><rect x="1650" y="583" width="7" height="9" fill="#ffffff"/><rect x="1650" y="629" width="7" height="9" fill="#e07a30"/><rect x="1650" y="656" width="7" height="8" fill="#7a70a8"/><rect x="1650" y="870" width="7" height="8" fill="#e6299a"/><rect x="1650" y="878" width="7" height="4" fill="#b8243c"/><rect x="1650" y="971" width="7" height="7" fill="#ffffff"/><rect x="1650" y="1063" width="7" height="3" fill="#e07a30"/><rect x="1650" y="1143" width="7" height="6" fill="#a8302c"/>
<g fill="#4f92f5"><rect x="1657" y="84" width="6" height="8"/><rect x="1657" y="96" width="6" height="54"/><rect x="1657" y="156" width="6" height="7"/><rect x="1657" y="172" width="6" height="8"/><rect x="1657" y="192" width="6" height="8"/><rect x="1657" y="215" width="6" height="8"/><rect x="1657" y="234" width="6" height="9"/><rect x="1657" y="252" width="6" height="9"/><rect x="1657" y="269" width="6" height="15"/><rect x="1657" y="290" width="6" height="8"/><rect x="1657" y="326" width="6" height="8"/><rect x="1657" y="353" width="6" height="8"/><rect x="1657" y="380" width="6" height="6"/><rect x="1657" y="393" width="6" height="42"/><rect x="1657" y="456" width="6" height="33"/><rect x="1657" y="500" width="6" height="25"/><rect x="1657" y="531" width="6" height="8"/><rect x="1657" y="545" width="6" height="6"/><rect x="1657" y="560" width="6" height="11"/><rect x="1657" y="606" width="6" height="8"/><rect x="1657" y="623" width="6" height="8"/><rect x="1657" y="643" width="6" height="6"/><rect x="1657" y="654" width="6" height="6"/><rect x="1657" y="665" width="6" height="7"/><rect x="1657" y="685" width="6" height="23"/><rect x="1657" y="714" width="6" height="42"/></g>
<rect x="1645" y="108" width="12" height="1.500" fill="#cfcfcf"/>
<!-- overview ruler right -->
<rect x="2550" y="230" width="5" height="17" fill="#4f92f5"/>
<rect x="2544" y="280" width="5" height="100" fill="#4f7a80"/><rect x="2544" y="313" width="5" height="17" fill="#3c8f2e"/><rect x="2544" y="347" width="5" height="18" fill="#a8935a"/>
<path d="M2536 563h19v2h-6v16h-6v-16h-7z" fill="#7a7a7a"/>

<!-- annotation boxes -->
<g fill="none">
<rect x="24.500" y="180.500" width="183" height="30" stroke="#46a4cf" stroke-width="3.500"/>
<rect x="22.500" y="527.500" width="196" height="33" stroke="#46a4cf" stroke-width="3.500"/>
<rect x="1140" y="404.500" width="428" height="32" stroke="#eec35f" stroke-width="3.600"/>
<rect x="2062" y="324.500" width="434" height="30" stroke="#eec35f" stroke-width="3.600"/>
<rect x="2057.500" y="709.500" width="478" height="27" stroke="#3f9f4f" stroke-width="3.800"/>
</g>
<!-- arrows -->
<path d="M205 320.500L752 47" fill="none" stroke="#ff0000" stroke-width="6"/>
<path d="M764 41L743 41L759 59z" fill="#ff0000"/>
<path d="M342 644L1826 38" fill="none" stroke="#ff0000" stroke-width="6"/>
<path d="M1842.600 33L1812 35L1826 52z" fill="#ff0000"/>
</svg>
</body></html>
